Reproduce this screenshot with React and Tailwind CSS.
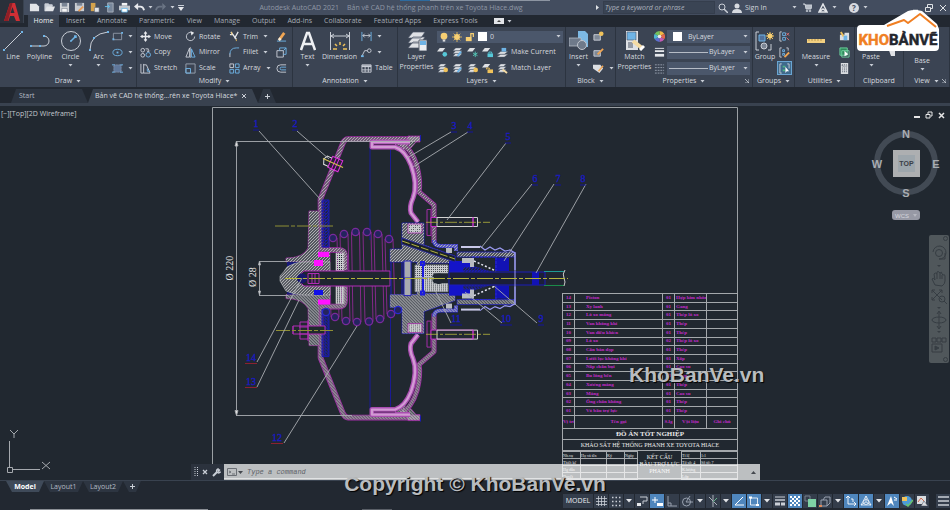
import React from "react";

const Svg = ({ w = 12, h = 12, vb, className = "", children }) => (
  <svg width={w} height={h} viewBox={vb || `0 0 ${w} ${h}`} fill="none" stroke="#c9ced6" strokeWidth="1" className={`shrink-0 ${className}`} aria-hidden="true">
    {children}
  </svg>
);

const Caret = ({ className = "" }) => (
  <Svg w={5} h={3} className={className}><path d="M.5 0h4L2.500 2.500z" fill="#c9ced6" stroke="none" /></Svg>
);

const BLUE = "#6fb4e6";
const GOLD = "#f0c25a";

/* 12 x 12 glyphs for the ribbon, quick access and status bars */
const glyphs = {
  newFile: <path d="M1 2h7l3 3v5H1z" fill="#e2e4e8" stroke="none" />,
  open: <><path d="M1 10V2h4l1 1h3v2" fill="#c9ced6" /><path d="M1 10l2-5h9l-2 5z" fill="#e2e4e8" stroke="none" /></>,
  save: <><path d="M1 1h10v10H1z" fill="#d4d6da" stroke="none" /><path d="M3 1h6v4H3z" fill="#7b8595" stroke="none" /><path d="M3 7h6v4H3z" fill="#f4f4f4" stroke="#6b7485" strokeWidth=".6" /></>,
  saveAs: <><path d="M1 1h10v9H1z" fill="#c9ccd1" stroke="none" /><path d="M3 1h6v3H3z" fill="#7b8595" stroke="none" /><path d="M5 10l5-5" stroke="#e79a54" strokeWidth="2" /></>,
  cloudOpen: <><path d="M2 1h5v9H2z" fill="#d3a24c" stroke="none" /><path d="M6 6h5v5H6z" fill="#dfe2e6" stroke="#596375" strokeWidth=".6" /></>,
  mobile: <><path d="M4 1h6v10H4z" fill="#78879b" stroke="#b8bec8" strokeWidth=".8" /><path d="M1 5h5M4 3l2 2-2 2" stroke="#63c2ee" /></>,
  print: <><path d="M3 1h6v3H3z" fill="#f1f2f4" stroke="none" /><path d="M0 4h12v5H0z" fill="#c3c8cf" stroke="none" /><path d="M3 7h6v4H3z" fill="#fff" stroke="#58b0e6" strokeWidth=".8" /></>,
  undo: <><path d="M0 5l4.500-4v8z" fill="#e6e8ec" stroke="none" /><path d="M4 5h3q3 0 4 4" stroke="#e6e8ec" strokeWidth="2" /></>,
  redo: <><path d="M12 5L8 1v8z" fill="#6a7484" stroke="none" /><path d="M8 5H5Q2 5 1 9" stroke="#6a7484" strokeWidth="1.800" /></>,
  rect: <><path d="M1.500 2.500h9v7h-9z" stroke="#8f98a6" /><path d="M.5 9h2M10 2h2" stroke={BLUE} strokeWidth="2" /></>,
  ellipse: <><ellipse cx="6" cy="6" rx="5" ry="3.500" stroke={BLUE} /><path d="M5 6h2" stroke={BLUE} strokeWidth="2" /></>,
  hatch: <><path d="M2 2h8v8H2z" fill="#60779a" stroke="#94a4bb" strokeDasharray="1 1" /><path d="M0 2h3M9 2h3M0 10h3M9 10h3" stroke={BLUE} /></>,
  move: <><path d="M6 1v10M1 6h10" stroke="#e6e8ec" strokeWidth="1.500" /><path d="M6 0l2 3H4zM6 12l2-3H4zM0 6l3-2v4zM12 6L9 4v4z" fill="#e6e8ec" stroke="none" /></>,
  copy: <><circle cx="3" cy="3.500" r="2" /><circle cx="3" cy="9" r="2" /><circle cx="9" cy="8.500" r="2.500" stroke={BLUE} /><path d="M6 2h3v3M7.500 4L9 5.500 10.500 4" /></>,
  stretch: <><path d="M1 1v10h3V1M4 2h3l4 9H4" /><path d="M8 6v3h3" stroke={BLUE} /></>,
  rotate: <><path d="M8 2A4.500 4.500 0 1 0 10.500 6" /><path d="M6 0l4 2-3 3z" fill="#e6e8ec" stroke="none" /></>,
  mirror: <><path d="M5 1v10H1z" /><path d="M7 2v9h4z" stroke={BLUE} /><path d="M6 0v12" strokeWidth=".6" /></>,
  scale: <><path d="M1 1h10v10H1z" stroke="#9aa4b2" /><path d="M1 6h5v5H1z" stroke={BLUE} /></>,
  trim: <><path d="M2 1l6 8M10 1L6 8M1 4h4" stroke="#e6e8ec" strokeWidth="1.400" /><path d="M8 9v2M3 1v3" stroke={GOLD} /></>,
  fillet: <><path d="M1 11V7" /><path d="M1 8Q1 1 8 1h3" stroke={BLUE} /></>,
  array: <><path d="M1 1h4v4H1z" /><path d="M7 1h4v4H7zM1 7h4v4H1zM7 7h4v4H7z" stroke={BLUE} /></>,
  erase: <><path d="M1 11h10" stroke={BLUE} /><path d="M4 9l5-7" stroke="#f0a553" strokeWidth="3" /><path d="M3 10l2-2" stroke="#f5e9d5" strokeWidth="3" /></>,
  explode: <><path d="M1 4h7v7H1z" /><path d="M4 4V1h7v7H8M8 4l3-3" stroke={BLUE} /></>,
  offset: <><path d="M11 2H5a4 4 0 0 0 0 8h6" /><path d="M11 4.500H6a1.500 1.500 0 0 0 0 3h5" stroke={BLUE} /></>,
  linear: <><path d="M1 1v10M11 1v10" stroke={BLUE} /><path d="M2 5h8M4 3L2 5l2 2M8 3l2 2-2 2" /></>,
  leader: <><path d="M1 10l3-6h3" /><circle cx="9" cy="4" r="2" /><path d="M0 10h3" stroke={BLUE} strokeWidth="2" /></>,
  table: <><path d="M1 2h10v8H1zM1 7.500h10M4.500 4v6M8 4v6" /><path d="M1 3.500h10" strokeWidth="2" /></>,
  layA: <><path d="M3 1h6L6 5H0z" fill="#dfe1e5" stroke="none" /><circle cx="8.500" cy="8" r="2.500" fill="#56c8d8" stroke="none" /></>,
  layB: <><path d="M4 1h7L8 4H1zM4 4h7L8 7H1zM4 7h7l-3 3H1z" fill="#dfe1e5" stroke="#4b5565" strokeWidth=".5" /><path d="M6 10l4-5" stroke={BLUE} strokeWidth="2" /></>,
  layC: <><path d="M3 1h6L6 5H0z" fill="#dfe1e5" stroke="none" /><path d="M9 5v6M6.500 6.500l5 3M11.500 6.500l-5 3" stroke="#56c8b8" /></>,
  layD: <><path d="M3 1h6L6 5H0z" fill="#dfe1e5" stroke="none" /><path d="M6 7h6v4H6z" fill="#56c8d8" stroke="none" /><path d="M7.500 7V5.500h3V7" stroke="#56c8d8" /></>,
  layE: <><path d="M4 5h8L8 8H0zM4 8h8l-4 3H0z" fill="#dfe1e5" stroke="#4b5565" strokeWidth=".5" /><path d="M5 5V1h5v4z" fill={BLUE} stroke="none" /></>,
  layF: <><path d="M4 1h6L7 4H1zM4 4h6L7 7H1zM4 7h6l-3 3H1z" fill="#dfe1e5" stroke="#4b5565" strokeWidth=".5" /><circle cx="9.500" cy="7.500" r="2.500" fill={GOLD} stroke="none" /></>,
  layG: <><path d="M3 1h6L6 5H0z" fill="#dfe1e5" stroke="none" /><path d="M6 7h6v4H6z" fill={GOLD} stroke="none" /><path d="M5 7V5.500h3V7" stroke={GOLD} /></>,
  layH: <><path d="M4 1h6L7 4H1zM4 4h6L7 7H1zM4 7h6l-3 3H1z" fill="#dfe1e5" stroke="#4b5565" strokeWidth=".5" /><path d="M6 7l5 4" stroke="#f4dba4" strokeWidth="2" /></>,
  bulb: <><circle cx="6" cy="5" r="4" fill="#f6cf73" stroke="none" /><path d="M4.500 9h3v2.500h-3z" fill="#dcdcdc" stroke="none" /></>,
  sun: <><path d="M6 0v12M0 6h12M2 2l8 8M10 2l-8 8" stroke={GOLD} /><circle cx="6" cy="6" r="3.500" fill="#f6cf73" stroke="none" /></>,
  unlock: <><path d="M1 6h7v5H1z" fill="#f6cf73" stroke="none" /><path d="M7 6V2h3v4" stroke="#f6cf73" strokeWidth="1.500" /></>,
  blkA: <><path d="M1 4h7v6H1z" fill="#7f8997" stroke="#c9ced6" /><circle cx="9" cy="3" r="2.500" fill={GOLD} stroke="none" /></>,
  blkB: <><path d="M1 4h7v6H1z" fill="#7f8997" stroke="#c9ced6" /><path d="M5 8l6-6" stroke="#f0a553" strokeWidth="2" /></>,
  tag: <><path d="M0 2h8l3 4-4 5-7-5z" fill="#dcdfe3" stroke="none" /><path d="M6 9l5-6" stroke="#f0a553" strokeWidth="1.500" /></>,
  weights: <><path d="M1 1.500h10" stroke="#e6e8ec" /><path d="M1 4.500h10" stroke="#e6e8ec" strokeWidth="2" /><path d="M1 9h10" stroke="#e6e8ec" strokeWidth="3" /></>,
  dashes: <path d="M1 2h10M1 5h10M1 8h10M1 11h10" strokeDasharray="2 1" stroke="#98a1af" />,
  ungroup: <><path d="M3 1H1v10h2" /><path d="M4 2h3v3H4zM4 7h3v3H4z" stroke={BLUE} /><path d="M8 2l3 3M11 2L8 5M8 7l3 3" stroke="#e87474" /></>,
  groupEdit: <><path d="M3 1H1v10h2M8 1h2v3" /><path d="M4 3h2v2H4zM4 7h2v2H4z" stroke={BLUE} /><path d="M6 11l5-5" stroke="#f0a553" strokeWidth="2" /></>,
  groupSel: <><path d="M3 1H1v10h2M9 1h2v5" /><path d="M4 3h3v2H4zM4 7h3v2H4z" fill="#4fb384" stroke="none" /><path d="M7 4v7l1.500-2H11z" fill="#fff" stroke="none" /></>,
  quickSel: <><path d="M1 4h6v6H1zM6 2h5v8H6z" fill="#dcdfe3" stroke="none" /><path d="M2 1l3 5" stroke={GOLD} strokeWidth="2" /><path d="M5 5h4v5H5z" fill={BLUE} stroke="none" /></>,
  selAll: <><path d="M1 1h8v8H1z" fill="#2f8a5b" stroke="#6fd3a0" /><path d="M3 4h8v7H3z" stroke="#6fd3a0" /><path d="M6 4v6l4-2z" fill="#fff" stroke="none" /></>,
  calc: <><path d="M2 0h8v12H2z" fill="#d9dce0" stroke="none" /><path d="M3.500 2h5v1.500h-5zM3.500 5.500h5M3.500 7.500h5M3.500 9.500h5" stroke="#4b5565" strokeDasharray="1 1" /></>,
  grid: <path d="M3.500 1v10M6.500 1v10M9.500 1v10M1 3.500h11M1 6.500h11M1 9.500h11" strokeWidth=".8" />,
  dots: <path d="M2 2.500h9M2 6.500h9M2 10.500h9" strokeWidth="1.500" strokeDasharray="1.500 2" />,
  infer: <><path d="M4 2h7v4H7v3" /><path d="M1 8h4v3H1z" fill="#e6e8ec" stroke="none" /></>,
  dyn: <><path d="M1 5h6M4 2v6" stroke="#fff" /><path d="M6 8h6v3H6z" fill="#fff" stroke="none" /></>,
  ortho: <path d="M2 1v10h9M2 8h3v3" stroke="#98a1af" />,
  polar: <><circle cx="5.500" cy="7" r="4" stroke="#98a1af" /><path d="M5 7h7M5 7l4-6" stroke="#98a1af" /></>,
  iso: <><path d="M2 2l8 8M6 0v12" strokeWidth=".8" /><path d="M10 3L6 7" stroke="#66b38a" /></>,
  otrack: <path d="M10 2L2 10h9" stroke="#fff" />,
  osnap: <><path d="M2.500 3h7v7h-7z" stroke="#fff" strokeWidth=".8" /><path d="M1 2.500h3M8 10h3" stroke="#fff" strokeWidth="2" /></>,
  lwt: <><path d="M1 2h10" /><path d="M1 5h10" strokeWidth="1.500" /><path d="M1 9h10" strokeWidth="3" strokeDasharray="5 1" /></>,
  transp: <><path d="M1 2h10M1 6h10M1 10h10" stroke="#fff" strokeWidth="2" strokeDasharray="2 2" /><path d="M3 4h8M3 8h8" stroke="#fff" strokeWidth="2" strokeDasharray="2 2" /></>,
  cycling: <><path d="M1 1h5v5H1z" stroke="#78828f" /><path d="M4 4h8v8H4z" fill="#7ed2a5" stroke="none" /></>,
  osnap3: <><path d="M2 5h6v6H2zM4 5l2-3h5v6l-3 3" stroke="#98a1af" /><path d="M0 11h3" stroke="#e08a5a" strokeWidth="2" /></>,
  ucs: <path d="M3 1v8h8M1 3l2-2 2 2M9 7l2 2-2 2M6 4h2v3" stroke="#fff" strokeWidth=".9" />,
  gizmo: <><path d="M6 1l5 9H1zM6 1v6l5 3M6 7l-5 3" stroke="#fff" strokeWidth=".7" /><circle cx="6" cy="7" r="2.500" stroke="#fff" strokeWidth=".7" /></>,
  annot: <><path d="M1 11L5 1l3 10-3-3z" fill="#fff" stroke="none" /><path d="M8 2l3 2M8 5h3" stroke="#fff" /></>,
  workspace: <><circle cx="6" cy="6" r="5" fill="#4d9bd8" stroke="none" /><path d="M1 2h5v4H1z" fill={GOLD} stroke="none" /><path d="M5 9l2 2 5-6" stroke="#69c36d" strokeWidth="1.500" /></>,
  monitor: <><path d="M1 1h9v8H1z" fill="#d9dce0" stroke="none" /><path d="M2 7l3-4 3 3" stroke="#d06a4c" /><path d="M8 6l4 5H5z" fill="#d9dce0" stroke="#3a4352" strokeWidth=".5" /></>,
  menu: <path d="M1 2h11M1 6h11M1 10h11" strokeWidth="1.500" />,
};

const Ico = ({ n, s = 12 }) => <Svg w={s} h={s} vb="0 0 12 12">{glyphs[n]}</Svg>;

const QuickBtn = ({ n, label }) => (
  <button aria-label={label} className="flex w-[15px] justify-center"><Ico n={n} s={11} /></button>
);

function TitleBar() {
  const quick = [["newFile", "New"], ["open", "Open"], ["save", "Save"], ["saveAs", "Save as"], ["cloudOpen", "Open from cloud"], ["mobile", "Save to mobile"], ["print", "Plot"], ["undo", "Undo"]];
  return (
    <div className="relative flex h-[15px] items-center bg-[#434d5f] pl-[27px] text-[#8f97a5]">
      <div className="absolute left-[400px] top-0 h-px w-[150px] border-l-[30px] border-[#2e6a9e] bg-[#8d95a2]" />
      {quick.map(([n, l]) => <QuickBtn key={n} n={n} label={l} />)}
      <button aria-label="Undo history" className="flex w-[6px] justify-center"><Caret /></button>
      <QuickBtn n="redo" label="Redo" />
      <button aria-label="Redo history" className="flex w-[8px] justify-center"><Caret /></button>
      <button aria-label="Customize quick access" className="flex w-[10px] justify-center"><Svg w={6} h={6}><path d="M0 .5h6" /><path d="M0 2h6L3 6z" fill="#e6e8ec" stroke="none" /></Svg></button>
      <div className="flex flex-1 justify-center gap-2 whitespace-nowrap">
        <span>Autodesk AutoCAD 2021</span>
        <span>Bản vẽ CAD hệ thống phanh trên xe Toyota Hiace.dwg</span>
      </div>
      <div className="flex w-[354px] shrink-0 items-center">
        <Svg w={3} h={5} className="mr-1"><path d="M0 0v5l3-2.500z" fill="#dfe2e6" stroke="none" /></Svg>
        <input aria-label="Search" placeholder="Type a keyword or phrase" className="h-[13px] w-[112px] border border-[#353e4d] bg-[#3a4454] px-px text-[7px] italic placeholder:text-[#adb3be] outline-none" />
        <button aria-label="Find" className="ml-[2px] flex w-[12px] justify-center"><Svg w={10} h={10}><circle cx="4" cy="4" r="3" /><path d="M6 6l4 4" strokeWidth="1.500" /></Svg></button>
        <button className="ml-[3px] flex items-center gap-[3px] text-[#d0d4db]">
          <Svg w={10} h={10}><circle cx="5" cy="3" r="2.500" fill="#d7dae0" stroke="none" /><path d="M0 10q0-4 5-4t5 4z" fill="#d7dae0" stroke="none" /></Svg>Sign In</button>
        <Caret className="ml-auto" />
        <button aria-label="Store" className="ml-[6px]"><Svg w={9} h={9}><path d="M0 1h2l1 5h5l1-4H2" fill="#b9bfc9" /><circle cx="4" cy="8" r=".8" /><circle cx="7" cy="8" r=".8" /></Svg></button>
        <button aria-label="Autodesk apps" className="ml-[6px]"><Svg w={10} h={10}><path d="M5 1l4 8H1zM1 9l4-3 4 3" strokeWidth="1.500" stroke="#e2e4e8" /></Svg></button>
        <Caret className="ml-1" />
        <button aria-label="Help" className="ml-[12px] flex h-[10px] w-[10px] items-center justify-center rounded-full bg-[#d7dae0] text-[8px] font-bold text-[#434d5f]">?</button>
        <Caret className="ml-1" />
        <div className="ml-[43px] flex items-center gap-[6px] pr-[3px]">
          <button aria-label="Minimize"><Svg w={8} h={8}><path d="M2 6.500h5" stroke="#fff" strokeWidth="1.500" /></Svg></button>
          <button aria-label="Restore"><Svg w={8} h={8}><path d="M.5 3.500h5v4h-5zM2.500 3V.5h5v4H6" stroke="#dfe2e6" /></Svg></button>
          <button aria-label="Close"><Svg w={8} h={8}><path d="M1 1l6 6M7 1L1 7" stroke="#dfe2e6" /></Svg></button>
        </div>
      </div>
    </div>
  );
}

function RibbonTabs() {
  const tabs = ["Insert", "Annotate", "Parametric", "View", "Manage", "Output", "Add-ins", "Collaborate", "Featured Apps", "Express Tools"];
  return (
    <nav className="flex h-[12px] items-center gap-[12px] bg-[#222831] pl-[28px] text-[#a5abb5]">
      <button className="-mr-[5px] h-full w-[31px] bg-[#3b4453] text-[#eef0f3]">Home</button>
      {tabs.map((t) => <button key={t} className="whitespace-nowrap">{t}</button>)}
      <button aria-label="Ribbon display" className="ml-1 flex items-center gap-[3px]">
        <Svg w={10} h={6}><path d="M0 0h10v6H0z" fill="#e2e4e8" stroke="none" /><path d="M3 4h4L5 2z" fill="#444" stroke="none" /></Svg><Caret />
      </button>
    </nav>
  );
}

const Panel = ({ title, caret = true, corner, children }) => (
  <section className="flex min-w-0 flex-col border-r border-[#2c3440] bg-[#3b4453]">
    <div className="flex h-[49px] pt-[2px]">{children}</div>
    <div className="relative flex h-[11px] items-center justify-center gap-1 pb-px">
      <span>{title}</span>{caret && <Caret />}
      {corner && <Svg w={4} h={4} className="absolute right-0 mr-[3px]"><path d="M0 0l4 4V0M4 4H0" strokeWidth=".8" /></Svg>}
    </div>
  </section>
);

const Big = ({ icon, label, caret, className = "" }) => (
  <button className={`flex flex-col items-center ${className}`}>
    <span className="flex h-[23px] items-center">{icon}</span>
    <span className="whitespace-pre text-center leading-[10px]">{label}</span>
    {caret && <Caret className="mt-[2px]" />}
  </button>
);

const Col = ({ children, className = "" }) => <div className={`grid grid-rows-3 items-center ${className}`}>{children}</div>;
const Tool = ({ n, label, caret, aria }) => (
  <button aria-label={aria} className="flex items-center gap-[3px] whitespace-nowrap text-left">
    <Ico n={n} s={11} />{label && <span>{label}</span>}{caret && <Caret className="ml-[2px]" />}
  </button>
);

const sideSelect = "min-w-0 flex-1 appearance-none bg-transparent text-[7px] outline-none";

function Ribbon() {
  return (
    <div className="grid grid-cols-[137fr_156fr_105fr_168fr_50fr_137fr_42fr_60fr_49fr_46fr] text-[#d6d9df]">
      <Panel title="Draw">
        <Big className="w-[26px]" label="Line" icon={<Svg w={20} h={20}><path d="M1 19L19 1" /><path d="M0 19h2M18 1h2" stroke={BLUE} strokeWidth="2" /></Svg>} />
        <Big className="w-[27px]" label="Polyline" icon={<Svg w={20} h={20}><path d="M1 15h13a5 5 0 0 0 0-10" /><path d="M0 15h2M9 15h2M13 5h2" stroke={BLUE} strokeWidth="2" /></Svg>} />
        <Big className="w-[35px]" label="Circle" caret icon={<Svg w={20} h={20}><circle cx="10" cy="10" r="9.500" /><path d="M10 10l5-5M13 5h2v2M9 10h2" stroke={BLUE} strokeWidth="1.500" /></Svg>} />
        <Big className="w-[21px]" label="Arc" caret icon={<Svg w={20} h={20}><path d="M1 19Q1 3 19 1" /><path d="M0 19h2M18 1h2M4 7h2" stroke={BLUE} strokeWidth="2" /></Svg>} />
        <Col className="ml-[3px]"><Tool n="rect" caret aria="Rectangle" /><Tool n="ellipse" caret aria="Ellipse" /><Tool n="hatch" caret aria="Hatch" /></Col>
      </Panel>
      <Panel title="Modify">
        <Col className="ml-[3px] w-[45px]"><Tool n="move" label="Move" /><Tool n="copy" label="Copy" /><Tool n="stretch" label="Stretch" /></Col>
        <Col className="w-[44px]"><Tool n="rotate" label="Rotate" /><Tool n="mirror" label="Mirror" /><Tool n="scale" label="Scale" /></Col>
        <Col className="w-[47px]"><Tool n="trim" label="Trim" caret /><Tool n="fillet" label="Fillet" caret /><Tool n="array" label="Array" caret /></Col>
        <Col><Tool n="erase" aria="Erase" /><Tool n="explode" aria="Explode" /><Tool n="offset" aria="Offset" /></Col>
      </Panel>
      <Panel title="Annotation">
        <Big className="w-[29px]" label="Text" caret icon={<Svg w={16} h={20}><path d="M1 19L7 2h2l6 17M3.500 13h9" stroke="#eef0f3" strokeWidth="2.500" /></Svg>} />
        <Big className="w-[35px]" label="Dimension" icon={<Svg w={20} h={20}><path d="M.5 1v18M19.500 1v18M1 5h18M4 3L1 5l3 2M16 3l3 2-3 2" /><path d="M10 11v3M5 13l2 2M15 13l-2 2M3 18h4M13 18h4" stroke={GOLD} strokeWidth="1.500" /></Svg>} />
        <Col className="ml-[4px]"><Tool n="linear" caret aria="Linear" /><Tool n="leader" caret aria="Leader" /><Tool n="table" label="Table" /></Col>
      </Panel>
      <Panel title="Layers">
        <Big className="w-[37px]" label={"Layer\nProperties"} icon={<Svg w={20} h={20}><path d="M6 1h12l-4 6H1zM6 6h12l-4 6H1zM6 11h12l-4 6H1z" fill="#dfe1e5" stroke="#4b5565" strokeWidth=".7" /><path d="M12 9h8v11h-8z" fill="#eef0f3" stroke="#59616e" /><path d="M13 10h6v4h-6z" fill={BLUE} stroke="none" /></Svg>} />
        <div className="grid min-w-0 flex-1 grid-rows-3 items-center pl-[2px]">
          <div className="mr-[2px] flex h-[12px] items-center gap-[3px] bg-[#4b576b] pl-[2px] pr-[2px]">
            <Ico n="bulb" s={10} /><Ico n="sun" s={10} /><Ico n="unlock" s={10} />
            <span className="h-[9px] w-[9px] bg-white" />
            <select aria-label="Layer" className={sideSelect}><option>0</option></select><Caret />
          </div>
          <div className="flex items-center gap-[4px]">{["layA", "layB", "layC", "layD"].map((n) => <Tool key={n} n={n} aria={n} />)}<Tool n="layE" label="Make Current" /></div>
          <div className="flex items-center gap-[4px]">{["layF", "layB", "layF", "layG"].map((n, i) => <Tool key={i} n={n} aria={n} />)}<Tool n="layH" label="Match Layer" /></div>
        </div>
      </Panel>
      <Panel title="Block">
        <Big className="w-[25px]" label="Insert" caret icon={<Svg w={20} h={20}><path d="M9 0h7l3 3v13H9z" fill="#7db9e4" stroke="none" /><path d="M0 7h12v8H0z" fill="#6f7a8a" stroke="#c0c5cd" strokeWidth=".7" /><circle cx="13" cy="14" r="4.500" fill="#6f7a8a" stroke="#c0c5cd" /></Svg>} />
        <Col className="ml-[2px]"><Tool n="blkA" aria="Create" /><Tool n="blkB" aria="Edit" /><Tool n="tag" caret aria="Attributes" /></Col>
      </Panel>
      <Panel title="Properties" corner>
        <Big className="w-[37px]" label={"Match\nProperties"} icon={<Svg w={20} h={20}><path d="M1 0h12v19H1z" fill="#dfe1e5" stroke="none" /><path d="M2 1h9v8H2z" fill={BLUE} stroke="#4b5565" strokeWidth=".6" /><path d="M3 12h5M3 14h5M3 16h5" stroke="#4b5565" /><path d="M8 10l9 7" stroke="#f4dba4" strokeWidth="4" /><path d="M15 19l4-4" stroke="#fff" strokeWidth="3" /></Svg>} />
        <Col className="w-[13px] justify-center">
          <Svg w={11} h={11} vb="0 0 12 12"><g stroke="none"><path d="M6 6V0a6 6 0 0 1 5.200 3z" fill="#f0b945" /><path d="M6 6l5.200-3a6 6 0 0 1 0 6z" fill="#e2674c" /><path d="M6 6l5.200 3A6 6 0 0 1 6 12z" fill="#c05bb5" /><path d="M6 6v6a6 6 0 0 1-5.200-3z" fill="#5d6fd1" /><path d="M6 6L.8 9a6 6 0 0 1 0-6z" fill="#4fb6cf" /><path d="M6 6L.8 3A6 6 0 0 1 6 0z" fill="#74c35b" /><circle cx="6" cy="6" r="2" fill="#e8e8e8" /></g></Svg>
          <Ico n="weights" s={11} /><Ico n="dashes" s={11} />
        </Col>
        <Col className="min-w-0 flex-1 pl-px pr-[2px]">
          <div className="flex h-[13px] items-center bg-[#4b576b] pl-[6px] pr-[2px]"><span className="h-[9px] w-[9px] bg-white" /><select aria-label="Object color" className={`${sideSelect} ml-[6px]`}><option>ByLayer</option></select><Caret /></div>
          <div className="flex h-[13px] items-center bg-[#4b576b] pl-[2px] pr-[2px]"><span className="h-px w-[39px] bg-[#b6bcc6]" /><select aria-label="Lineweight" className={`${sideSelect} ml-px`}><option>ByLayer</option></select><Caret /></div>
          <div className="flex h-[13px] items-center bg-[#4b576b] pl-[2px] pr-[2px]"><span className="h-px w-[39px] bg-[#b6bcc6]" /><select aria-label="Linetype" className={`${sideSelect} ml-px`}><option>ByLayer</option></select><Caret /></div>
        </Col>
      </Panel>
      <Panel title="Groups">
        <Big className="w-[24px]" label="Group" icon={<Svg w={20} h={20}><path d="M4 1H1v18h3M13 19h3v-6" /><path d="M4 4h6v6H4z" fill="#52709a" stroke={BLUE} /><circle cx="9" cy="15" r="3" fill="#7b8594" /><path d="M15 1v8M11 5h8M12 2l6 6M18 2l-6 6" stroke={GOLD} /><circle cx="15" cy="5" r="2.500" fill="#f6cf73" stroke="none" /></Svg>} />
        <Col className="justify-items-center"><Tool n="ungroup" aria="Ungroup" /><Tool n="groupEdit" aria="Group edit" /><span className="flex h-[14px] w-[15px] items-center justify-center border border-[#6aa5d2] bg-[#3f6a8c]"><Tool n="groupSel" aria="Group selection" /></span></Col>
      </Panel>
      <Panel title="Utilities">
        <Big className="w-[42px]" label="Measure" caret icon={<Svg w={18} h={6}><path d="M0 1h18v4H0z" fill="#f2cf80" stroke="none" /><path d="M2 3V1M5 3V1M8 3V1M11 3V1M14 3V1" stroke="#a8833a" strokeWidth=".7" /></Svg>} />
        <Col className="ml-[2px]"><Tool n="quickSel" aria="Quick select" /><Tool n="selAll" aria="Select all" /><Tool n="calc" aria="Calculator" /></Col>
      </Panel>
      <Panel title="Clipboard" caret={false}>
        <Big className="w-[32px]" label="Paste" caret icon={null} />
        <div className="pt-[14px]"><Svg w={10} h={14}><path d="M0 2h8v11H4z" fill="#dfe1e5" stroke="none" /></Svg></div>
      </Panel>
      <Panel title="View" corner>
        <Big className="w-[36px] pt-[4px]" label="Base" caret icon={null} />
      </Panel>
    </div>
  );
}

const SiteLogo = () => (
  <div className="absolute right-[10px] top-[9px]">
    <svg width="84" height="44" viewBox="0 0 84 44" aria-label="KHOBANVE">
      <path d="M5 16H28L52 2Q58 0 66 2L81 15 83 20V38Q83 42 79 42H5Q1 42 1 38V20Q1 16 5 16Z" fill="#fff" />
      <path d="M31 17L48 11 52 14 64 5 80 18" fill="none" stroke="#f07f23" strokeWidth="2" strokeLinejoin="round" />
      <text x="42" y="36" textAnchor="middle" fontFamily="Roboto,'Liberation Sans',sans-serif" fontWeight="700" fontSize="15" fill="#f07f23" stroke="#f07f23" strokeWidth=".5">KHO<tspan fill="#23262d" stroke="#23262d">BẢNVẼ</tspan></text>
    </svg>
  </div>
);

function DocTabs() {
  const cut = "[clip-path:polygon(5px_0,calc(100%-6px)_0,100%_100%,0_100%)]";
  return (
    <div className="flex h-[19px] items-end border-b-[3px] border-[#39424f] bg-[#222831] pl-[11px] text-[#d6d9df]">
      <button className={`h-[14px] w-[77px] bg-[#2d3541] pl-2 text-left text-[#b4bac4] ${cut}`}>Start</button>
      <div className={`flex h-[14px] w-[170px] items-center gap-[4px] bg-[#39424f] pl-[7px] ${cut}`}>
        <button className="whitespace-nowrap">Bản vẽ CAD hệ thống...rên xe Toyota Hiace*</button>
        <button aria-label="Close tab"><Svg w={6} h={6}><path d="M1 1l4 4M5 1L1 5" /></Svg></button>
      </div>
      <button aria-label="New tab" className={`flex h-[14px] w-[18px] items-center justify-center bg-[#2d3541] ${cut}`}><Svg w={7} h={7}><path d="M3.500 1v5M1 3.500h5" /></Svg></button>
    </div>
  );
}

/* A thick wall: coloured outline, dark core, hatched fill */
const Wall = ({ d, w = 4, edge = "#a32ca8", hatch = "url(#hW)" }) => (
  <g fill="none" strokeLinejoin="round">
    <path d={d} stroke={edge} strokeWidth={w + 1.6} />
    <path d={d} stroke="#4d3a55" strokeWidth={w} />
    <path d={d} stroke={hatch} strokeWidth={w} />
  </g>
);

const Half = () => (
  <g fill="none">
    <path d="M370 147V240M390.500 150V242" stroke="#1a1a94" />
    <Wall d="M420 139H348Q345 139 343 143L320.500 199V250H339Q345 250 345 256V270" />
    <path d="M408 136h12v6h-4l-5 6h-8z" fill="url(#hA)" stroke="#a32ca8" strokeWidth=".7" />
    <path d="M420.500 135v6" stroke="#1c1cb0" />
    <Wall d="M400 142Q412 149 417 166Q421 182 419 192L434 205V243" w={3.4} />
    <path d="M434 240Q434 246 441 246H456V251" stroke="#2a2ac8" strokeWidth="4" />
    <path d="M434 240Q434 246 441 246H456V251" stroke="url(#hA)" strokeWidth="3" />
    <path d="M395 142L408 158L404 146L412 142Z" fill="url(#hA)" />
    <path d="M410 142H372V147H395Q405 150 411 165Q418 185 413 198Q409 207 411 213L418 222" stroke="#a94db0" strokeWidth="5" strokeLinejoin="round" />
    <path d="M410 142H372V147H395Q405 150 411 165Q418 185 413 198Q409 207 411 213L418 222" stroke="#d29ad4" strokeWidth="2.400" strokeLinejoin="round" />
    <path d="M374 144.500H395" stroke="#5a2a64" strokeWidth="1" />
    <path d="M322 200h7v47h-7z" fill="url(#hB)" stroke="#1a1ab0" />
    <path d="M309 211h10v41H330V262H286V258Q303 258 308 248Z" fill="#262c36" stroke="#8f2a94" strokeWidth=".8" />
    <path d="M309 211h10v41H330V262H286V258Q303 258 308 248Z" fill="url(#hA)" />
    <path d="M287 262H318V267H287Z" fill="#17197a" />
    <path d="M336 253h8v18h-8z" fill="url(#hC)" stroke="#c9c9c9" strokeWidth=".6" />
    <path d="M402 223H424V245L455 256V263H425V272H417V262H390V249H402Z" fill="#30363f" stroke="#2323b8" strokeWidth=".8" />
    <path d="M402 223H424V245L455 256V263H425V272H417V262H390V249H402Z" fill="url(#hA)" />
    <path d="M408 224h14v9h-14z" fill="url(#hC)" stroke="#a32ca8" strokeWidth=".8" />
    <path d="M404 261h7v17h-7z" fill="#a9acb0" stroke="#2323b8" />
    <path d="M415 265H448V273H434Q430 278 434 279H415Z" fill="#4b4f57" />
    <path d="M415 265H448V273H434Q430 278 434 279H415Z" fill="url(#hC)" stroke="#a8acb2" strokeWidth=".6" />
    <path d="M421 265h3v-3h-3zM423 264v14" stroke="#1a1ae0" strokeWidth="2" />
    <path d="M427 209.500h4v26h-4z" stroke="#a32ca8" />
    <path d="M431 217.500h42v9h-42z" fill="#222831" stroke="#c32cc8" />
    <path d="M437 217.500H477.500V226.500H437Z" stroke="#d3d3d3" />
    <path d="M473 217v10" stroke="#c32cc8" />
    <path d="M426 222.300h64" stroke="#b5b53c" strokeWidth=".8" strokeDasharray="12 2 3 2" />
    <path d="M457 252H515V257H457Z" fill="url(#hA)" stroke="#2323c8" strokeWidth=".7" />
    <path d="M446 248h6v5h-6z" fill="#b9bcc2" />
    <path d="M461 247H480" stroke="#c8c8e8" strokeWidth="2" />
    <path d="M480 246L485 250 490 247 495 250 500 248 505 251 510 250 515 253V270" stroke="#9a9af0" strokeWidth="1.200" />
    <path d="M449 261h25v17h-25z" fill="url(#hB)" />
    <path d="M449 261h14l4-3h6v9h-10v5h-14z" fill="#1414c8" />
    <path d="M462 258h12v9h-4v-4h-8z" fill="#b9bcc2" />
    <path d="M474 261L496 271" stroke="#e6e6f4" strokeWidth="1.500" strokeDasharray="2 2" />
    <path d="M474 266L496 273V279H474Z" fill="url(#hB)" />
    <path d="M495 258h14v13h-14z" fill="#1212b4" />
    <path d="M472 257H496V271" stroke="#2a2ad0" strokeDasharray="3 1" />
  </g>
);

const callouts = [
  ["1", 256, 127, "M259 131L320 199"], ["2", 295, 127, "M297 131L329 159"],
  ["3", 454, 129, "M451 132L407 158"], ["4", 470, 129, "M468 132L413 167"],
  ["5", 508, 140, "M506 143L447 220"], ["6", 535, 182, "M532 184L481 248"],
  ["7", 558, 182, "M554 184L504 261"], ["8", 583, 182, "M586 184L536 273"],
  ["9", 541, 322, "M537 323L494 286"], ["10", 506, 322, "M502 323L465 292"],
  ["11", 456, 322, "M451 323L435 290"], ["12", 277, 441, "M284 443L357 326", 1],
  ["13", 251, 385, "M257 387L299 300", 1], ["14", 251, 361, "M257 362L302 278", 1],
];
const topCoils = [[333, 238], [344, 234], [355.5, 232], [367, 232], [378, 234], [389, 239]];
const lowCoils = [[326, 312], [335, 317], [346, 321], [357, 322], [369, 321.5], [380, 319], [391, 314], [398, 310]];

function BoosterDrawing() {
  return (
    <svg width="526" height="372" viewBox="212 107 526 372" className="block" fill="none" role="img" aria-label="Brake booster section">
      <defs>
        <pattern id="hA" width="3" height="3" patternUnits="userSpaceOnUse"><path d="M-1 1L1 -1M0 3L3 0M2 4L4 2" stroke="#b4b5b8" strokeWidth="1.200" /></pattern>
        <pattern id="hW" width="3" height="3" patternUnits="userSpaceOnUse"><path d="M-1 1L1 -1M0 3L3 0M2 4L4 2" stroke="#b3a3b6" strokeWidth="1.200" /></pattern>
        <pattern id="hB" width="3" height="3" patternUnits="userSpaceOnUse"><path d="M0 3L3 0M0 0h3" stroke="#1a1ab4" strokeWidth="1.200" /></pattern>
        <pattern id="hC" width="2" height="2" patternUnits="userSpaceOnUse"><path d="M0 0h2v1H0zM0 1h1v1H0z" fill="#c9cbce" /></pattern>
      </defs>
      <g stroke="#8f2a94" strokeWidth=".9">
        {topCoils.map(([x, y], i) => <path key={i} d={`M${x - 4} ${y}L${lowCoils[i + 1][0] - 4} ${lowCoils[i + 1][1]}M${x + 4} ${y}L${lowCoils[i + 1][0] + 4} ${lowCoils[i + 1][1]}`} />)}
      </g>
      <Half />
      <g transform="translate(0 556.600) scale(1 -1)"><Half /></g>
      {[...topCoils, ...lowCoils].map(([x, y], i) => <circle key={i} cx={x} cy={y} r="3.600" fill="#24245e" stroke={i % 7 === 6 ? "#2a2ad0" : "#7a2a9c"} strokeWidth="1.300" />)}
      <path d="M287 267Q295 262 304 262H330V295H304Q295 295 286 291Q283 286 280 281V276Q284 272 287 267Z" fill="#30363f" />
      <path d="M287 267Q295 262 304 262H330V295H304Q295 295 286 291Q283 286 280 281V276Q284 272 287 267Z" fill="url(#hA)" stroke="#b9bcc0" strokeWidth=".6" />
      <path d="M390 271H304Q300 273 300 278Q300 284 304 286H390Z" fill="#1f2530" stroke="#b02cb4" />
      <circle cx="302" cy="278.500" r="5" fill="#16166c" />
      <path d="M308 273.500h11v10h-11zM312 273v11M315 273v11" stroke="#b02cb4" />
      <path d="M318 252h11v5h-11zM314 260h9v6h-9zM318 299.500h12v5h-12z" fill="#ff12ff" />
      <path d="M314 290h9v5h-9z" fill="#1010e8" />
      <path d="M391 262V294M402 262V294" stroke="#1c1cc0" />
      <path d="M402 238L455 256V262L402 244Z" fill="#1c222c" stroke="#2323b8" strokeWidth=".7" />
      <path d="M402 241L455 259" stroke="#b5b53c" strokeDasharray="8 2" />
      <path d="M434 278.500a5 5 0 0 1 8-4H563V283H442a5 5 0 0 1-8-4.500" fill="#1f2530" />
      <path d="M449 272H545V285H449Z" fill="#1b1f38" stroke="#1c1cb8" />
      <path d="M532 272h7v13h-7z" fill="#1212b4" />
      <path d="M515 252V305" stroke="#9a9af0" />
      <path d="M544 271.500h20" stroke="#1d9a94" /><path d="M544 285.500h20" stroke="#1b8a4a" />
      <path d="M565 270q-3 4-1 8t0 8" stroke="#c8c8c8" />
      <path d="M285 278.500H568" stroke="#b5b53c" strokeDasharray="16 2 4 2" />
      <path d="M275 226H333" stroke="#8f8f34" strokeDasharray="14 2 4 2" />
      <path d="M293 326h32v8h-32z" fill="#1f2a2c" stroke="#b02cb4" /><path d="M300 322h8v17h-8zM299 327h9M299 334h9M308 320v21M293 326v8" stroke="#b02cb4" />
      <path d="M276 330.500H333" stroke="#8f8f34" strokeDasharray="14 2 4 2" />
      <g transform="rotate(24 333 163)">
        <path d="M330 157h11v12h-11z" fill="#2a2036" stroke="#e030e0" /><path d="M334 157v12M337 157v12" stroke="#e030e0" />
        <path d="M330 159h-5l-2 4 2 5h5" stroke="#e6e6e6" /><path d="M322 163h22" stroke="#d5c44c" />
      </g>
      <g stroke="#a9adb1" strokeWidth=".9">
        <path d="M236.500 141V415.500M236 141.500H415M236 415.500H352M259.500 261V295.500M259 261.500H288M259 295.500H288" />
        <path d="M236.500 141l-1.500 5h3zM236.500 415.500l-1.500-5h3zM259.500 261l-1 4h2zM259.500 295l-1-4h2z" fill="#e6e6e6" />
        {callouts.map((c) => <path key={c[0]} d={c[3]} />)}
      </g>
      <g fontFamily="'Liberation Serif',serif" fontSize="10">
        <text transform="rotate(-90 233 268)" x="233" y="268" textAnchor="middle" fill="#e2e2e2">Ø 220</text>
        <text transform="rotate(-90 256 277)" x="256" y="277" textAnchor="middle" fill="#e2e2e2">Ø 28</text>
        {callouts.map(([n, x, y, , red]) => (
          <g key={n}><text x={x} y={y} textAnchor="middle" fill="#1a1ac4" stroke="#1a1ac4" strokeWidth=".3">{n}</text>
            <path d={red ? `M${x - 6} ${y + 2.500}h12` : `M${x - n.length * 3} ${y + 3}h${n.length * 6}`} stroke={red ? "#8a2230" : "#14149a"} /></g>
        ))}
      </g>
      <path d="M212.500 107.500H737.500V478.500H212.500Z" stroke="#9ba0a4" />
    </svg>
  );
}

const parts = [
  ["14", "Piston", "01", "Hợp kim nhôm"], ["13", "Xy lanh", "01", "Gang"], ["12", "Lò xo màng", "01", "Thép lò xo"],
  ["11", "Van không khí", "01", "Thép"], ["10", "Van điều khiển", "01", "Thép"], ["09", "Lò xo", "02", "Thép lò xo"],
  ["08", "Cần bàn đạp", "01", "Thép"], ["07", "Lưới lọc không khí", "01", "Xốp"], ["06", "Nắp chắn bụi", "01", "Cao su"],
  ["05", "Bu lông bền", "01", "Thép"], ["04", "Xương màng", "01", "Thép"], ["03", "Màng", "01", "Cao su"],
  ["02", "Ống chân không", "01", "Thép"], ["01", "Vỏ bầu trợ lực", "01", "Thép"],
];

function TitleBlock() {
  const cell = "border border-[#a4a8ac] p-0 overflow-hidden whitespace-nowrap";
  const left = [["Nh.vụ", "Họ và tên", "Ký", "Ngày"], ["Thiết kế", "", "", ""], ["Hg dẫn", "", "", ""], ["Duyệt", "", "", ""]];
  const right = [["Tỉ lệ", "1:1"], ["Tờ số: 4", "Số tờ: 7"], ["K.lượng", ""], ["Lớp", ""]];
  return (
    <div className="absolute bottom-0 right-0 w-[176px] font-['Liberation_Serif',serif] text-[5px] leading-[6px] text-[#e8e8e8]">
      <table className="h-[136px] w-full table-fixed border-collapse font-bold text-[#c42aca]">
        <colgroup><col className="w-[12px]" /><col /><col className="w-[12px]" /><col className="w-[32px]" /><col className="w-[31px]" /></colgroup>
        <tbody>
          {parts.map(([no, name, qty, mat]) => (
            <tr key={no}><td className={`${cell} text-center`}>{no}</td><td className={`${cell} pl-[11px]`}>{name}</td><td className={`${cell} text-center`}>{qty}</td><td className={`${cell} pl-px`}>{mat}</td><td className={cell} /></tr>
          ))}
          <tr className="h-[13px] text-center">{["Vị trí", "Tên gọi", "S.lg", "Vật liệu", "Ghi chú"].map((t) => <td key={t} className={cell}>{t}</td>)}</tr>
        </tbody>
      </table>
      <div className="flex h-[11px] items-center justify-center border-x border-b border-[#a4a8ac] text-[7px] font-bold">ĐỒ ÁN TỐT NGHIỆP</div>
      <div className="flex h-[11px] items-center justify-center whitespace-nowrap border-x border-b border-[#a4a8ac] text-[6px]">KHẢO SÁT HỆ THỐNG PHANH XE TOYOTA HIACE</div>
      <div className="flex h-[28px] text-[4px]">
        <table className="w-[76px] table-fixed border-collapse"><colgroup><col className="w-[18px]" /><col className="w-[26px]" /><col className="w-[18px]" /><col /></colgroup>
          <tbody>{left.map((r, i) => <tr key={i} className="h-[7px]">{r.map((t, j) => <td key={j} className={`${cell} leading-[5px]`}>{t}</td>)}</tr>)}</tbody></table>
        <div className="flex flex-1 flex-col items-center justify-center whitespace-nowrap border-b border-[#a4a8ac] text-[6px] leading-[7px]"><span>KẾT CẤU</span><span>BẦU TRỢ LỰC</span><span>PHANH</span></div>
        <table className="w-[57px] table-fixed border-collapse"><colgroup><col className="w-[19px]" /><col /></colgroup>
          <tbody>{right.map((r, i) => <tr key={i} className="h-[7px]">{r.map((t, j) => <td key={j} className={`${cell} leading-[5px]`}>{t}</td>)}</tr>)}</tbody></table>
      </div>
    </div>
  );
}

const Compass = () => (
  <div className="absolute right-[8px] top-[21px]">
    <svg width="72" height="96" viewBox="0 0 72 96" fontFamily="'Liberation Sans',sans-serif" fontWeight="700" textAnchor="middle" aria-label="View cube">
      <circle cx="36" cy="36" r="29" fill="none" stroke="#424a54" strokeWidth="6" />
      <path d="M23 23h27v27H23z" fill="#adafb1" /><path d="M28 28h17v17H28z" fill="#9da6ac" />
      <text x="36.500" y="39" fontSize="7" fill="#3b4047">TOP</text>
      <g fontSize="11" fill="#a9adb2"><text x="36" y="10.500">N</text><text x="36" y="70">S</text><text x="7" y="40.500">W</text><text x="66" y="40.500">E</text></g>
      <rect x="22" y="83" width="28" height="10" rx="3" fill="#9799a5" />
      <text x="32" y="90.500" fontSize="6" fontWeight="400" fill="#d6d7de">WCS</text><path d="M43 87h4l-2 3z" fill="#b5b7c0" />
    </svg>
  </div>
);

const NavBar = () => (
  <div className="absolute right-px top-[129px]">
    <svg width="20" height="128" viewBox="0 0 20 128" fill="none" stroke="#363d43" aria-label="Navigation bar">
      <rect width="20" height="128" rx="2" fill="#50575b" stroke="none" />
      <circle cx="16.500" cy="3.500" r="2" /><circle cx="16.500" cy="124.500" r="2" />
      <path d="M4 17a6.500 6.500 0 1 1 6 7H16V18" /><circle cx="10" cy="18" r="3.500" />
      <path d="M8 30h4l-2 2zM8 72h4l-2 2zM8 96h4l-2 2z" fill="#363d43" stroke="none" />
      <path d="M6 50L3 44q1-2 3 1L5 39q1-2 3 0v-2q1-1 2 0l1 1q2-2 2 1l1 1q2-1 2 1v5q0 3-3 5zM8 39v5M11 38v6M13 40v4" />
      <path d="M3 55l10 10M13 55L3 65M3 58v-3h3M10 55h3v3M3 62v3h3" /><circle cx="13" cy="64" r="3" /><path d="M15 66l3 3" />
      <ellipse cx="10" cy="85" rx="7" ry="3" /><path d="M10 77v16M8 79l2-3 2 3M8 91l2 3 2-3" />
      <path d="M3 103h4v4H3zM8 103h4v4H8zM13 103h4v4h-4zM3 109h10v8H3z" /><path d="M6 111v4l4-2z" fill="#363d43" />
    </svg>
  </div>
);

function Viewport() {
  return (
    <main className="relative flex h-[374px] justify-center overflow-hidden bg-[#212830]">
      <div className="absolute left-px top-[3px] text-[7px] leading-[10px] text-[#c5c9ce]">[−][Top][2D Wireframe]</div>
      <div className="relative mt-px h-[372px] w-[526px] shrink-0">
        <BoosterDrawing />
        <TitleBlock />
      </div>
      <div className="absolute right-[5px] top-[5px] flex gap-[4px]">
        <button aria-label="Minimize drawing"><Svg w={8} h={8}><path d="M1 6h6" stroke="#e6e6e6" strokeWidth="2" /></Svg></button>
        <button aria-label="Restore drawing"><Svg w={8} h={8}><path d="M1 3.500h4v3.500H1zM3 3V1h4v4H5.500" stroke="#e6e6e6" /></Svg></button>
        <button aria-label="Close drawing"><Svg w={8} h={8}><path d="M2 2l5 5M7 2L2 7" stroke="#e6e6e6" strokeWidth="1.500" /></Svg></button>
      </div>
      <Compass />
      <NavBar />
      <div className="absolute bottom-[6px] left-[7px]">
        <svg width="44" height="46" viewBox="0 0 44 46" fill="none" stroke="#a5a9ae" aria-label="UCS icon"><path d="M2.500 40V13M5 41.500H33M.5 39.500h5v5h-5zM3 2l4 4 4-4M7 6v4M35 34l8 7M43 34l-8 7" /></svg>
      </div>
      <div className="absolute bottom-0 left-1/2 flex h-[16px] w-[569px] -translate-x-[284px] items-center">
        <div className="flex h-full w-[33px] items-center justify-between bg-[#2b323d] px-[3px]">
          <Svg w={4} h={10}><path d="M1 0v10M3.500 0v10" strokeDasharray="1 1" /></Svg>
          <button aria-label="Close command line"><Svg w={6} h={6}><path d="M1 1l4 4M5 1L1 5" strokeWidth="1.300" /></Svg></button>
          <button aria-label="Customize"><Svg w={9} h={9}><path d="M1 8l4-4" strokeWidth="2" /><path d="M8 1.500L6.500 3 6 1a2 2 0 1 0 2.500 2.500" strokeWidth="1.500" /></Svg></button>
        </div>
        <div className="flex h-full flex-1 items-center bg-[#ffffffb3] pl-[3px] pr-[4px]">
          <Svg w={10} h={8}><path d="M.5 .5h9v7h-9z" stroke="#6b6f75" /><path d="M2 3l2 1-2 1M5 6h3" stroke="#6b6f75" /></Svg>
          <Svg w={5} h={3} className="ml-px"><path d="M0 0h5L2.500 3z" fill="#44484e" stroke="none" /></Svg>
          <input aria-label="Command" placeholder="Type a command" className="ml-[4px] min-w-0 flex-1 bg-transparent font-['Liberation_Mono',monospace] text-[7px] italic placeholder:text-[#5f6368] outline-none" />
          <Svg w={5} h={3}><path d="M0 3h5L2.500 0z" fill="#44484e" stroke="none" /></Svg>
        </div>
      </div>
    </main>
  );
}

function LayoutTabs() {
  const cut = "[clip-path:polygon(0_0,100%_0,calc(100%-5px)_100%,6px_100%)]";
  return (
    <div className="flex h-[12px] border-t border-[#39424f] bg-[#222831] pl-[6px] text-[#b4bac4]">
      <button className={`w-[38px] bg-[#3f4a59] font-bold text-white ${cut}`}>Model</button>
      <button className={`w-[39px] bg-[#2d3541] ${cut}`}>Layout1</button>
      <button className={`w-[40px] bg-[#2d3541] ${cut}`}>Layout2</button>
      <button aria-label="New layout" className={`flex w-[18px] items-center justify-center bg-[#2d3541] ${cut}`}><Svg w={7} h={7}><path d="M3.500 1v5M1 3.500h5" /></Svg></button>
    </div>
  );
}

function StatusBar() {
  const items = ["grid", "dots", "|", "infer", "dyn*", "ortho", "polar", "|", "iso", "|", "otrack*", "osnap*", "|", "lwt", "transp*", "cycling", "osnap3", "|", "ucs*", "gizmo*", "|", "annot*", "workspace", "monitor"];
  return (
    <footer className="relative flex h-[18px] items-center justify-end gap-px bg-[#222831]">
      <button className="h-[14px] w-[30px] bg-[#343d4b] text-[#eef0f3]">MODEL</button>
      {items.map((it, i) => {
        if (it === "|") return <button key={i} aria-label="Options" className="flex h-[14px] w-[10px] items-center justify-center bg-[#343d4b]"><Svg w={6} h={4}><path d="M0 0h6L3 3.500z" fill="#e2e4e8" stroke="none" /></Svg></button>;
        const on = it.endsWith("*");
        return <button key={i} aria-label={it.replace("*", "")} className={`flex h-[14px] w-[14px] items-center justify-center ${on ? "bg-[#4f86bd]" : "bg-[#343d4b]"}`}><Ico n={it.replace("*", "")} /></button>;
      })}
      <button aria-label="Customization" className="ml-[6px] flex h-[14px] w-[14px] items-center justify-center bg-[#343d4b]"><Ico n="menu" /></button>
      <div className="absolute bottom-0 left-[30px] h-px w-[178px] bg-[#8b8f95]" />
      <div className="absolute bottom-0 left-[362px] h-px w-[30px] bg-[#5a5f67]" />
    </footer>
  );
}

export default function App() {
  const mark = "font-['Liberation_Sans',sans-serif] font-bold whitespace-nowrap text-[#b9bcbf] [text-shadow:1px_1px_1px_#000]";
  return (
    <div className="relative min-h-screen w-full overflow-hidden bg-[#222831] font-['Open_Sans','Noto_Sans',sans-serif] text-[7px] leading-[10px]">
      <TitleBar />
      <RibbonTabs />
      <Ribbon />
      <DocTabs />
      <Viewport />
      <LayoutTabs />
      <StatusBar />
      <button aria-label="Application menu" className="absolute left-0 top-0 flex h-[23px] w-[24px] items-center justify-center border-r border-[#39424f] bg-[#2a303a]">
        <Svg w={16} h={18}><path d="M0 18L6 0h5l5 18h-4l-2-5H6l-1.500 5z" fill="#cf2f35" stroke="none" /><path d="M6.500 10L8.500 4l2 6z" fill="#2a303a" stroke="none" /><path d="M0 18L6 0h2.500L4 18z" fill="#8f1f26" stroke="none" /></Svg>
      </button>
      <SiteLogo />
      <div className={`absolute left-1/2 top-[363px] translate-x-[154px] text-[21px] leading-[24px] ${mark}`}>KhoBanVe.vn</div>
      <div className={`absolute left-1/2 top-[472px] -translate-x-1/2 text-[21px] leading-[24px] ${mark}`}>Copyright © KhoBanVe.vn</div>
    </div>
  );
}
